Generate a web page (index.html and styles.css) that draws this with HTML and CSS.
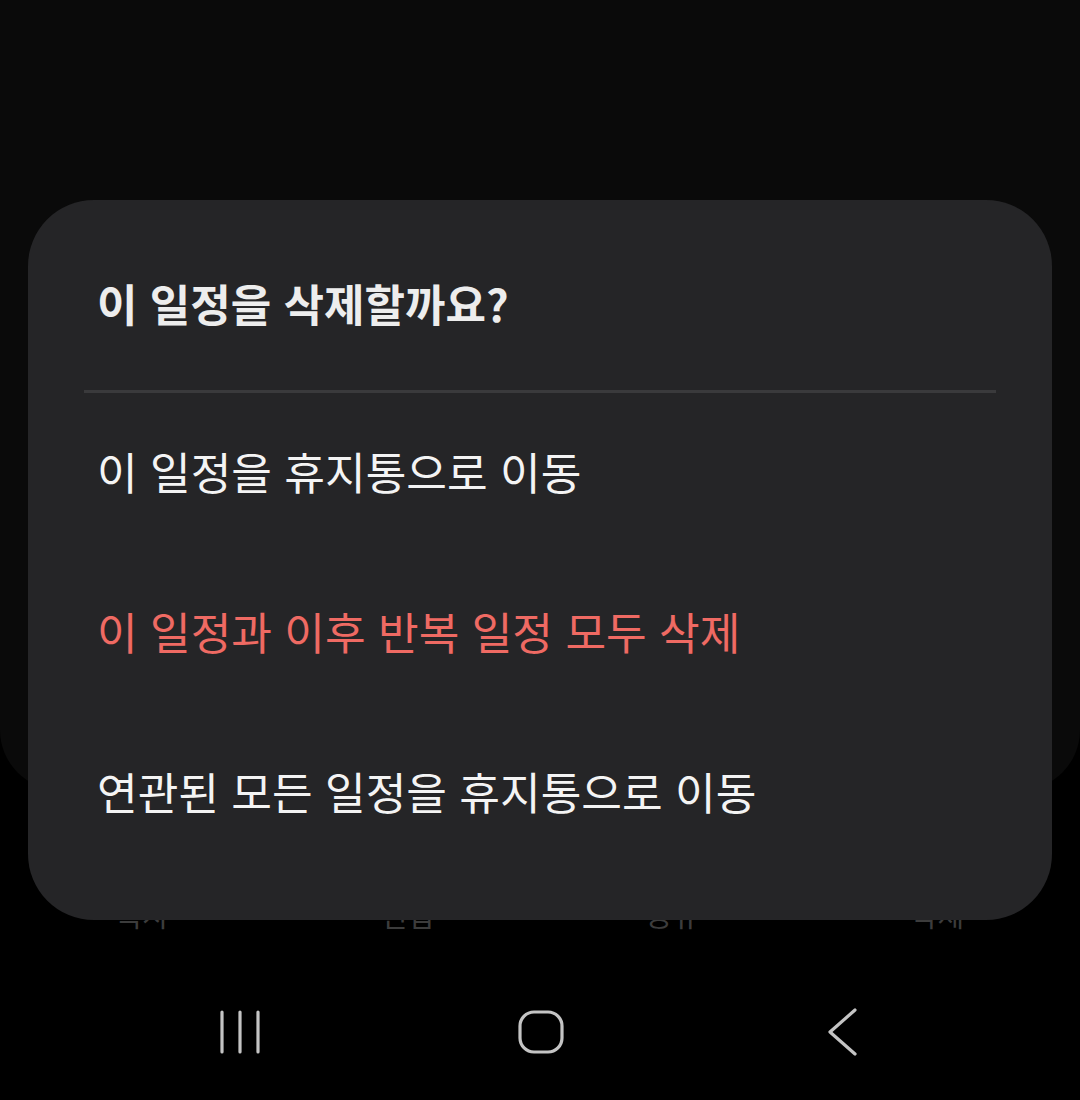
FILE: index.html
```html
<!DOCTYPE html>
<html lang="ko">
<head>
<meta charset="utf-8">
<link rel="stylesheet" href="styles.css">
</head>
<body>
<div class="screen">
  <div class="backdrop"></div>
  <div class="toolbar">
    <span class="tool">복사</span>
    <span class="tool">편집</span>
    <span class="tool">공유</span>
    <span class="tool">삭제</span>
  </div>
  <nav class="navbar">
    <svg class="nav-icon" width="48" height="48" viewBox="0 0 48 48">
      <path d="M6 4v40M24 4v40M42 4v40" fill="none" stroke="#c4c4c4" stroke-width="3.2" stroke-linecap="round"/>
    </svg>
    <svg class="nav-icon" width="48" height="48" viewBox="0 0 48 48">
      <rect x="3" y="4" width="42" height="40" rx="14" fill="none" stroke="#c4c4c4" stroke-width="3.2"/>
    </svg>
    <svg class="nav-icon" width="48" height="48" viewBox="0 0 48 48">
      <path d="M37 2L12 24l25 22" fill="none" stroke="#c4c4c4" stroke-width="3.2" stroke-linecap="round" stroke-linejoin="round"/>
    </svg>
  </nav>

  <div class="dialog">
    <div class="dialog-title">이 일정을 삭제할까요?</div>
    <div class="divider"></div>
    <div class="option">이 일정을 휴지통으로 이동</div>
    <div class="option danger">이 일정과 이후 반복 일정 모두 삭제</div>
    <div class="option">연관된 모든 일정을 휴지통으로 이동</div>
  </div>
</div>
</body>
</html>
```
FILE: styles.css
```css
html, body {
  margin: 0;
  padding: 0;
  background: #000;
}
body {
  font-family: "Noto Sans CJK KR", "Noto Sans", sans-serif;
}
.screen {
  position: relative;
  width: 1080px;
  height: 1100px;
  overflow: hidden;
  background: #000;
  display: flex;
  flex-direction: column;
}
.backdrop {
  height: 790px;
  background: #0a0a0a;
  border-radius: 0 0 60px 60px;
  flex: none;
}
.toolbar {
  display: grid;
  grid-template-columns: repeat(4, 1fr);
  padding: 0 10px;
  margin-top: 102px;
  height: 44px;
  align-items: center;
}
.tool {
  text-align: center;
  font-size: 29px;
  color: #3c3c3c;
  line-height: 44px;
}
.navbar {
  display: flex;
  align-items: center;
  gap: 253px;
  padding-left: 216px;
  margin-top: 72px;
  height: 48px;
}
.nav-icon { display: block; flex: none; }
.dialog {
  position: absolute;
  left: 28px;
  top: 200px;
  width: 1024px;
  height: 720px;
  box-sizing: border-box;
  background: #252527;
  border-radius: 66px;
  padding: 0 56px;
  display: flex;
  flex-direction: column;
}
.dialog-title {
  font-size: 44px;
  font-weight: 700;
  color: #ededed;
  height: 190px;
  line-height: 1;
  padding-top: 81px;
  box-sizing: border-box;
  padding-left: 13px;
}
.divider {
  height: 3px;
  background: #3a3a3c;
}
.option {
  font-size: 44.2px;
  color: #f4f4f4;
  height: 160px;
  display: flex;
  align-items: center;
  padding-left: 13px;
  line-height: 1;
}
.divider + .option { margin-top: -2px; }
.danger {
  color: #ef6a63;
}
```
